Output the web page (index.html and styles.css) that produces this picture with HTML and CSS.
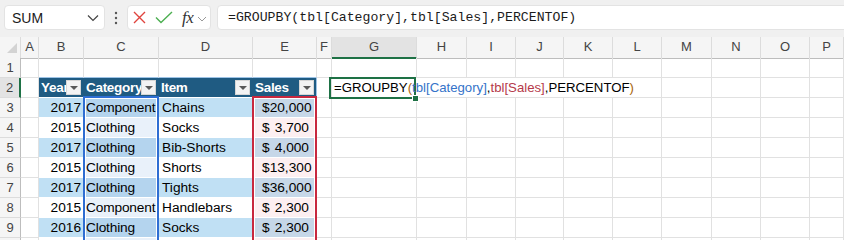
FILE: index.html
```html
<!DOCTYPE html>
<html>
<head>
<meta charset="utf-8">
<link rel="stylesheet" href="styles.css">
</head>
<body>
<div class="fbar">
  <div class="namebox"><span>SUM</span><svg width="12" height="8" viewBox="0 0 12 8"><polyline points="1,1.5 6,6.5 11,1.5" fill="none" stroke="#444" stroke-width="1.2"/></svg></div>
  <div class="dots"><svg width="4" height="14" viewBox="0 0 4 14"><circle cx="2" cy="2" r="1.2" fill="#555"/><circle cx="2" cy="7" r="1.2" fill="#555"/><circle cx="2" cy="12" r="1.2" fill="#555"/></svg></div>
  <div class="fxbox">
    <svg class="ix" width="13" height="13" viewBox="0 0 13 13"><path d="M1 1 L12 12 M12 1 L1 12" stroke="#e0443e" stroke-width="1.4" fill="none"/></svg>
    <svg class="ic" width="18" height="13" viewBox="0 0 18 13"><polyline points="1,6.5 6,11.5 17,1" fill="none" stroke="#4caf50" stroke-width="1.4"/></svg>
    <span class="fx">fx</span>
    <svg class="iv" width="10" height="6" viewBox="0 0 10 6"><polyline points="1,1 5,5 9,1" fill="none" stroke="#999" stroke-width="1"/></svg>
  </div>
  <div class="formula">=GROUPBY(tbl[Category],tbl[Sales],PERCENTOF)</div>
</div>

<div class="sheet">
  <div class="row hdr">
    <div class="corner"></div><div>A</div><div>B</div><div>C</div><div>D</div><div>E</div><div>F</div><div class="selc">G</div><div>H</div><div>I</div><div>J</div><div>K</div><div>L</div><div>M</div><div>N</div><div>O</div><div>P</div>
  </div>
  <div class="row">
    <div class="rh">1</div><div></div><div class="tb"></div><div class="tb"></div><div class="tb"></div><div class="tb"></div><div></div><div></div><div></div><div></div><div></div><div></div><div></div><div></div><div></div><div></div><div></div>
  </div>
  <div class="row">
    <div class="rh selr">2</div><div></div>
    <div class="th">Year<span class="fb"></span></div>
    <div class="th">Category<span class="fb"></span></div>
    <div class="th">Item<span class="fb"></span></div>
    <div class="th last">Sales<span class="fb"></span></div>
    <div></div>
    <div class="gcell"><div class="active"><span class="fh"></span></div><span class="ftxt">=GROUPBY<span class="par">(</span><span class="r1">tbl[Category]</span>,<span class="r2">tbl[Sales]</span>,PERCENTOF<span class="par">)</span></span></div>
    <div></div><div></div><div></div><div></div>
  </div>
  <div class="row band">
    <div class="rh">3</div><div></div><div class="t yr">2017</div><div class="t cat first"><span>Component</span></div><div class="t it">Chains</div><div class="t sal first"><span>$</span><span>20,000</span></div><div></div><div></div><div></div><div></div><div></div><div></div><div></div><div></div><div></div><div></div><div></div>
  </div>
  <div class="row">
    <div class="rh">4</div><div></div><div class="t yr">2015</div><div class="t cat"><span>Clothing</span></div><div class="t it">Socks</div><div class="t sal"><span>$</span><span>3,700</span></div><div></div><div></div><div></div><div></div><div></div><div></div><div></div><div></div><div></div><div></div><div></div>
  </div>
  <div class="row band">
    <div class="rh">5</div><div></div><div class="t yr">2017</div><div class="t cat"><span>Clothing</span></div><div class="t it">Bib-Shorts</div><div class="t sal"><span>$</span><span>4,000</span></div><div></div><div></div><div></div><div></div><div></div><div></div><div></div><div></div><div></div><div></div><div></div>
  </div>
  <div class="row">
    <div class="rh">6</div><div></div><div class="t yr">2015</div><div class="t cat"><span>Clothing</span></div><div class="t it">Shorts</div><div class="t sal"><span>$</span><span>13,300</span></div><div></div><div></div><div></div><div></div><div></div><div></div><div></div><div></div><div></div><div></div><div></div>
  </div>
  <div class="row band">
    <div class="rh">7</div><div></div><div class="t yr">2017</div><div class="t cat"><span>Clothing</span></div><div class="t it">Tights</div><div class="t sal"><span>$</span><span>36,000</span></div><div></div><div></div><div></div><div></div><div></div><div></div><div></div><div></div><div></div><div></div><div></div>
  </div>
  <div class="row">
    <div class="rh">8</div><div></div><div class="t yr">2015</div><div class="t cat"><span>Component</span></div><div class="t it">Handlebars</div><div class="t sal"><span>$</span><span>2,300</span></div><div></div><div></div><div></div><div></div><div></div><div></div><div></div><div></div><div></div><div></div><div></div>
  </div>
  <div class="row band">
    <div class="rh">9</div><div></div><div class="t yr">2016</div><div class="t cat"><span>Clothing</span></div><div class="t it">Socks</div><div class="t sal"><span>$</span><span>2,300</span></div><div></div><div></div><div></div><div></div><div></div><div></div><div></div><div></div><div></div><div></div><div></div>
  </div>
  <div class="row">
    <div class="rh"></div><div></div><div class="t yr"></div><div class="t cat"><span></span></div><div class="t it"></div><div class="t sal"></div><div></div><div></div><div></div><div></div><div></div><div></div><div></div><div></div><div></div><div></div><div></div>
  </div>
</div>
</body>
</html>
```

FILE: styles.css
```css
* { box-sizing: border-box; margin: 0; padding: 0; }
html, body { width: 844px; height: 240px; overflow: hidden; }
body { margin: 0; background: #fff; font-family: "Liberation Sans", Arial, sans-serif; color: #000; }

.fbar { height: 37px; background: #f0f0f0; display: flex; align-items: flex-start; padding: 5px 0 0 4px; overflow: hidden; }
.namebox { width: 101px; height: 25px; flex: none; background: #fff; border: 1px solid #e3e3e3; border-radius: 4px; display: flex; align-items: center; justify-content: space-between; padding: 0 5px 0 7px; font-size: 14px; color: #1b1b1b; }
.dots { width: 22px; height: 25px; flex: none; display: flex; align-items: center; justify-content: center; }
.fxbox { width: 84px; height: 25px; flex: none; background: #fff; border: 1px solid #e3e3e3; border-radius: 4px; display: flex; align-items: center; padding-left: 5px; }
.ix { margin-right: 9px; }
.ic { margin-right: 9px; }
.fx { font-family: "Liberation Serif", serif; font-style: italic; font-size: 17px; color: #333; line-height: 20px; margin-right: 4px; letter-spacing: -0.5px; }
.iv { margin-top: 2px; }
.formula { flex: 1; min-width: 640px; margin-left: 6px; height: 25px; background: #fff; border: 1px solid #e3e3e3; border-radius: 4px; padding-left: 10px; font-family: "Liberation Mono", monospace; font-size: 13.2px; line-height: 23px; color: #1b1b1b; white-space: nowrap; }

.sheet { display: flex; flex-direction: column; }
.row { display: grid; grid-template-columns: 21px 18px 45px 75px 94px 64px 15px 85px 50px 49px 48px 49px 49px 50px 49px 49px 1fr; height: 20px; flex: none; }
.row > * { position: relative; border-right: 1px solid #e1e1e1; border-bottom: 1px solid #e1e1e1; font-size: 14px; line-height: 19px; white-space: nowrap; }

.hdr { height: 21px; }
.hdr > * { background: #f5f5f5; border-right-color: #dcdcdc; border-bottom-color: #bdbdbd; text-align: center; font-size: 13px; line-height: 20px; color: #444; }
.hdr .selc { background: #e3e3e3; border-bottom: 2px solid #1e7145; }
.corner::after { content: ""; position: absolute; right: 3px; bottom: 5px; width: 0; height: 0; border-left: 10px solid transparent; border-bottom: 10px solid #d3d3d3; }

.row > .rh { background: #f5f5f5; border-right-color: #bdbdbd; border-bottom-color: #dcdcdc; text-align: center; font-size: 13px; color: #444; }
.row > .selr { background: #e3e3e3; border-right: 2px solid #1e7145; }

.row > .tb { border-bottom-color: #9dc3e6; }

.row > .th { background: #1f5b82; color: #fff; font-weight: bold; padding-left: 2px; overflow: hidden; border-right-color: #1f5b82; border-bottom-color: #fff; font-size: 13.5px; letter-spacing: -0.3px; }
.row > .th.last { border-right-color: #9dc3e6; }
.fb { position: absolute; right: 2px; top: 2px; width: 15px; height: 15px; background: #f3f3f3; border: 1px solid #d6d6d6; }
.fb::after { content: ""; position: absolute; left: 3px; top: 5px; border-left: 4px solid transparent; border-right: 4px solid transparent; border-top: 4px solid #595959; }

.row > .t { background: #fff; border-right-color: #fff; border-bottom-color: #fff; font-size: 13.7px; }
.band > .t { background: #c0e0f4; }
.row > .yr { text-align: right; padding-right: 2px; }
.row > .it { padding-left: 3px; overflow: hidden; }
.row > .cat { background: #e9f1fa; }
.band > .cat { background: #b4d4ee; }
.cat span { display: block; overflow: hidden; padding-left: 2px; letter-spacing: -0.15px; }
.row > .sal { background: #fdeff1; display: flex; justify-content: space-between; padding: 0 7px 0 9px; }
.band > .sal { background: #c6d7e8; }

.cat::after, .sal::after { content: ""; position: absolute; z-index: 2; top: 0; bottom: -1px; left: -1px; right: -1px; border-left: 2px solid; border-right: 2px solid; box-shadow: inset 1px 0 #fff, inset -1px 0 #fff; }
.cat::after { border-color: #2f6ed3; }
.sal::after { border-color: #c8283f; }
.cat.first::after, .sal.first::after { top: -2px; border-top: 2px solid; box-shadow: inset 1px 1px #fff, inset -1px 0 #fff; }
.cat.first::after { border-top-color: #2f6ed3; }
.sal.first::after { border-top-color: #c8283f; }

.row > .gcell { grid-column: span 6; padding-left: 2px; }
.active { position: absolute; z-index: 3; left: -3px; top: -1px; width: 87px; height: 22px; border: 2px solid #1e7145; }
.fh { position: absolute; right: -5px; bottom: -5px; width: 7px; height: 7px; background: #1e7145; border: 1px solid #fff; }
.ftxt { position: relative; z-index: 4; font-size: 13.2px; color: #000; }
.par { color: #a8650a; }
.r1 { color: #3473c9; }
.r2 { color: #b5394a; }
```
